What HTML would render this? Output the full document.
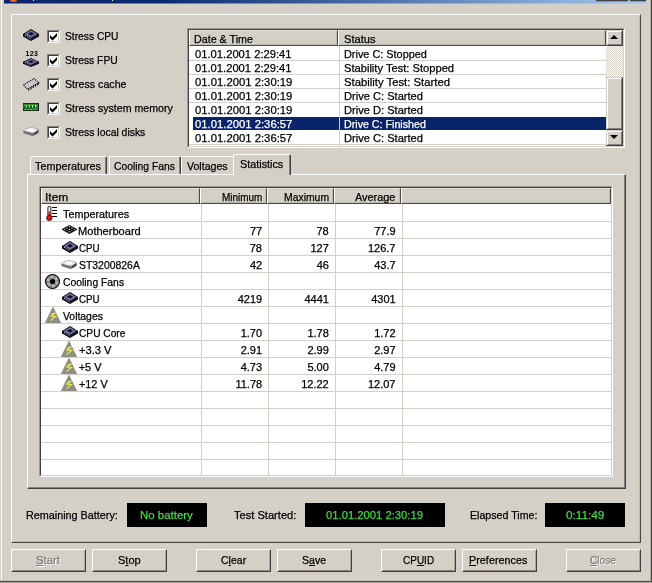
<!DOCTYPE html>
<html><head><meta charset="utf-8"><title>System Stability Test</title>
<style>
*{margin:0;padding:0;box-sizing:border-box}
html,body{width:652px;height:583px;overflow:hidden;background:#d4d0c8}
body{font-family:"Liberation Sans",sans-serif;font-size:11px;color:#000;line-height:13px}
#w{position:absolute;left:0;top:0;width:652px;height:583px;will-change:transform;overflow:hidden}
.a{position:absolute}
.t{position:absolute;white-space:nowrap;line-height:13px;transform-origin:0 0;-webkit-text-stroke:0.25px}
.title{left:0;top:0;width:652px;height:4px;background:linear-gradient(90deg,#0a246a 0%,#0a246a 10%,#a6caf0 100%)}
.raised{border:1px solid;border-color:#fff #484640 #484640 #fff}
.raised>i{position:absolute;left:0;top:0;right:0;bottom:0;border-right:1px solid #bcb8b0;border-bottom:1px solid #bcb8b0}
.sunk{border:1px solid;border-color:#a09c94 #fff #fff #a09c94}
.sunk>.in{position:absolute;left:0;top:0;right:0;bottom:0;border:1px solid;border-color:#404040 #d4d0c8 #d4d0c8 #404040;background:#fff;overflow:hidden}
.btn{position:absolute;height:23px;width:75px;border:1px solid;border-color:#fff #404040 #404040 #fff}
.btn>i{position:absolute;left:0;top:0;right:0;bottom:0;border:1px solid;border-color:#d4d0c8 #aaa69e #8c8880 #d4d0c8}
.dis{color:#808080;text-shadow:1px 1px 0 #fff}
.hd{position:absolute;background:#d4d0c8;border:1px solid;border-color:#e4e2dc #4c4a44 #4c4a44 #fff}
.hd>i{position:absolute;left:0;top:0;right:0;bottom:0;border-right:1px solid #c0bcb4;border-bottom:1px solid #c0bcb4}
.cb{position:absolute;width:13px;height:13px;border:1px solid;border-color:#808080 #fff #fff #808080;background:#fff}
.cb>i{position:absolute;left:0;top:0;right:0;bottom:0;border:1px solid;border-color:#404040 #d4d0c8 #d4d0c8 #404040}
.blk{position:absolute;background:#000}
.g{position:absolute;background:#d4d0c8}
svg{position:absolute;overflow:visible}
.tab{position:absolute;background:#d4d0c8;border-top:1px solid #fff;border-left:1px solid #fff;border-right:1px solid #404040;border-radius:2px 2px 0 0}
.tab>i{position:absolute;left:0;top:0;right:0;bottom:0;border-right:1px solid #808080}
</style></head><body><div id="w">
<div class="a" style="left:4px;top:0;width:643px;height:3px;background:linear-gradient(90deg,#0a246a 0%,#0c2a72 25%,#a6caf0 100%)"></div>
<div class="a" style="left:4px;top:3px;width:643px;height:1px;background:linear-gradient(90deg,#6f7a99 0%,#717e9d 25%,#bdcddc 100%)"></div>
<div class="a" style="left:10px;top:0;width:7px;height:2px;background:#e0681c;border-radius:0 0 4px 4px"></div>
<div class="a" style="left:33px;top:0;width:1px;height:1px;background:#fff"></div>
<div class="a" style="left:112px;top:0;width:1px;height:1px;background:#fff"></div>
<div class="a" style="left:596px;top:0;width:32px;height:1px;background:#404040"></div><div class="a" style="left:596px;top:1px;width:32px;height:1px;background:rgba(64,64,64,.25)"></div>
<div class="a" style="left:630px;top:0;width:16px;height:1px;background:#404040"></div><div class="a" style="left:630px;top:1px;width:16px;height:1px;background:rgba(64,64,64,.25)"></div>
<div class="a" style="left:1px;top:0;width:1px;height:582px;background:#fff"></div>
<div class="a" style="left:650px;top:0;width:1px;height:582px;background:#b4b0a8"></div>
<div class="a" style="left:651px;top:0;width:1px;height:583px;background:#404040"></div>
<div class="a" style="left:0;top:580px;width:651px;height:1px;background:#c4c0b8"></div>
<div class="a" style="left:0;top:581px;width:652px;height:1px;background:#4c4a46"></div>
<div class="a" style="left:0;top:582px;width:652px;height:1px;background:#a8a49e"></div>
<div class="a raised" style="left:11px;top:14px;width:630px;height:529px"><i></i></div>
<div class="cb" style="left:47px;top:30px"><i></i><svg style="left:1px;top:1px" width="9" height="9" viewBox="0 0 9 9"><path d="M1 3 L3.5 5.5 L8 1 L8 4 L3.5 8.5 L1 6 Z" fill="#000"/></svg></div>
<div class="cb" style="left:47px;top:54px"><i></i><svg style="left:1px;top:1px" width="9" height="9" viewBox="0 0 9 9"><path d="M1 3 L3.5 5.5 L8 1 L8 4 L3.5 8.5 L1 6 Z" fill="#000"/></svg></div>
<div class="cb" style="left:47px;top:78px"><i></i><svg style="left:1px;top:1px" width="9" height="9" viewBox="0 0 9 9"><path d="M1 3 L3.5 5.5 L8 1 L8 4 L3.5 8.5 L1 6 Z" fill="#000"/></svg></div>
<div class="cb" style="left:47px;top:102px"><i></i><svg style="left:1px;top:1px" width="9" height="9" viewBox="0 0 9 9"><path d="M1 3 L3.5 5.5 L8 1 L8 4 L3.5 8.5 L1 6 Z" fill="#000"/></svg></div>
<div class="cb" style="left:47px;top:126px"><i></i><svg style="left:1px;top:1px" width="9" height="9" viewBox="0 0 9 9"><path d="M1 3 L3.5 5.5 L8 1 L8 4 L3.5 8.5 L1 6 Z" fill="#000"/></svg></div>
<svg style="left:23px;top:29px" width="16" height="12" viewBox="0 0 16 12" preserveAspectRatio="none"><path d="M8 0 L16 5 L16 7.5 L8 12 L0 7.5 L0 5 Z" fill="#050510"/><path d="M8 1.1 L14.6 5 L8 8.9 L1.4 5 Z" fill="#6e6e90"/><path d="M8 2.9 L11 4.8 L8 6.5 L5 4.8 Z" fill="#0a0a34"/><path d="M1.2 6.3 L8 10.3 L14.8 6.3 L14.8 7 L8 11 L1.2 7 Z" fill="#2a2a40"/><path d="M2 6.2 l1 .6 M4.2 7.5 l1 .6 M6.4 8.8 l1 .6" stroke="#d8d8f0" stroke-width="0.9"/></svg>
<div class="t" style="left:25.5px;top:50px;font-size:7px;line-height:7px;letter-spacing:0.3px;font-weight:bold;-webkit-text-stroke:0">123</div>
<svg style="left:23px;top:57.5px" width="16" height="9" viewBox="0 0 16 12" preserveAspectRatio="none"><path d="M8 0 L16 5 L16 7.5 L8 12 L0 7.5 L0 5 Z" fill="#050510"/><path d="M8 1.1 L14.6 5 L8 8.9 L1.4 5 Z" fill="#6e6e90"/><path d="M8 2.9 L11 4.8 L8 6.5 L5 4.8 Z" fill="#0a0a34"/><path d="M1.2 6.3 L8 10.3 L14.8 6.3 L14.8 7 L8 11 L1.2 7 Z" fill="#2a2a40"/><path d="M2 6.2 l1 .6 M4.2 7.5 l1 .6 M6.4 8.8 l1 .6" stroke="#d8d8f0" stroke-width="0.9"/></svg>
<svg style="left:23px;top:78px" width="16" height="13" viewBox="0 0 16 13"><path d="M0.4 6.9 L11 0.5 L15.7 4.5 L4.4 11.3 Z" fill="#c6c6c6"/><path d="M0.4 6.9 L11 0.5 L15.7 4.5 L4.4 11.3 Z" fill="none" stroke="#0c0c0c" stroke-width="1.1" stroke-dasharray="1.1 0.9"/><path d="M5.9 10.6 v2 M8.1 9.3 v2 M10.2 8 v2 M12.3 6.8 v2 M14.3 5.6 v2 M15.5 4.4 v2.2" stroke="#0c0c0c" stroke-width="1.1"/></svg>
<svg style="left:23px;top:103px" width="16" height="8" viewBox="0 0 16 8"><rect x="0" y="0" width="16" height="8" fill="#0c200c"/><rect x="0.5" y="0.8" width="14.8" height="5" fill="#2a8a2a"/><path d="M3 2 v2.4 M6.2 2 v2.4 M9.4 2 v2.4 M12.6 2 v2.4" stroke="#b8f4b0" stroke-width="1.1"/><path d="M2 3.2 v2 M5.2 3.2 v2 M8.4 3.2 v2 M11.6 3.2 v2" stroke="#0a3a0a" stroke-width="1"/><rect x="15" y="0" width="1" height="8" fill="#081008"/><path d="M1.5 6.6 H14.5" stroke="#d8d850" stroke-width="1" stroke-dasharray="2 1"/></svg>
<svg style="left:23px;top:127px" width="16" height="9" viewBox="0 0 16 9"><path d="M0.3 3.6 Q0.3 2.6 2 2 L6 0.4 Q7 0 8.5 0.3 L14.5 1.8 Q15.8 2.2 15.8 3.2 L15.8 5 Q15.8 6 14.5 6.7 L11 8.6 Q10 9.1 8.5 8.7 L1.5 6.6 Q0.3 6.2 0.3 5.2 Z" fill="#747474"/><path d="M0.6 3.4 Q0.6 2.7 2 2.2 L6 0.7 Q7 0.3 8.5 0.6 L14.3 2 Q15.5 2.4 14.6 3.2 L11 5.6 Q10 6.2 8.6 5.8 L1.8 4 Q0.6 3.8 0.6 3.4 Z" fill="#e4e4e4"/><ellipse cx="7.6" cy="2.9" rx="3.4" ry="1.5" fill="#fafafa"/><path d="M11 6.3 L15.3 3.6 L15.3 5 L11 7.9 Z" fill="#3c3c3c"/></svg>
<div class="a sunk" style="left:187px;top:28px;width:438px;height:120px"><div class="in">
<div class="hd" style="left:0;top:0;width:149px;height:16px"><i></i></div>
<div class="hd" style="left:149px;top:0;width:268px;height:16px"><i></i></div>
<div class="g" style="left:0;top:30px;width:417px;height:1px"></div>
<div class="g" style="left:0;top:44px;width:417px;height:1px"></div>
<div class="g" style="left:0;top:58px;width:417px;height:1px"></div>
<div class="g" style="left:0;top:72px;width:417px;height:1px"></div>
<div class="a" style="left:4px;top:87px;width:413px;height:13px;background:#0a246a"></div>
<div class="g" style="left:0;top:114px;width:417px;height:1px"></div>
<div class="g" style="left:150px;top:16px;width:1px;height:100px"></div>
<div class="a" style="left:417px;top:0;width:17px;height:116px;background:repeating-conic-gradient(#fff 0 25%,#d4d0c8 0 50%) 0 0/2px 2px"></div>
<div class="a" style="left:417px;top:0px;width:17px;height:16px;background:#d4d0c8;border:1px solid;border-color:#d4d0c8 #404040 #404040 #d4d0c8"><div class="a" style="left:0;top:0;right:0;bottom:0;border:1px solid;border-color:#fff #808080 #808080 #fff"></div><svg style="left:3px;top:4px" width="8" height="4" viewBox="0 0 8 4"><path d="M0 4 L4 0 L8 4 Z" fill="#000"/></svg></div>
<div class="a" style="left:417px;top:100px;width:17px;height:16px;background:#d4d0c8;border:1px solid;border-color:#d4d0c8 #404040 #404040 #d4d0c8"><div class="a" style="left:0;top:0;right:0;bottom:0;border:1px solid;border-color:#fff #808080 #808080 #fff"></div><svg style="left:3px;top:4px" width="8" height="4" viewBox="0 0 8 4"><path d="M0 0 L8 0 L4 4 Z" fill="#000"/></svg></div>
<div class="a" style="left:417px;top:47px;width:17px;height:53px;background:#d4d0c8;border:1px solid;border-color:#d4d0c8 #404040 #404040 #d4d0c8"><div class="a" style="left:0;top:0;right:0;bottom:0;border:1px solid;border-color:#fff #808080 #808080 #fff"></div></div>
</div></div>
<div class="tab" style="left:30px;top:156px;width:77px;height:18px"><i></i></div>
<div class="tab" style="left:109px;top:156px;width:72px;height:18px"><i></i></div>
<div class="tab" style="left:181px;top:156px;width:54px;height:18px"><i></i></div>
<div class="a" style="left:27px;top:174px;width:599px;height:315px;border:1px solid;border-color:#fff #404040 #404040 #fff"><div class="a" style="left:0;top:0;right:0;bottom:0;border-right:1px solid #808080;border-bottom:1px solid #808080"></div></div>
<div class="tab" style="left:233px;top:154px;width:58px;height:21px"><i></i></div>
<div class="a sunk" style="left:39px;top:186px;width:574px;height:291px"><div class="in">
<div class="hd" style="left:0px;top:0;width:159px;height:16px"><i></i></div>
<div class="hd" style="left:159px;top:0;width:67px;height:16px"><i></i></div>
<div class="hd" style="left:226px;top:0;width:67px;height:16px"><i></i></div>
<div class="hd" style="left:293px;top:0;width:67px;height:16px"><i></i></div>
<div class="hd" style="left:360px;top:0;width:210px;height:16px"><i></i></div>
<div class="g" style="left:0;top:33px;width:570px;height:1px"></div>
<div class="g" style="left:0;top:50px;width:570px;height:1px"></div>
<div class="g" style="left:0;top:67px;width:570px;height:1px"></div>
<div class="g" style="left:0;top:84px;width:570px;height:1px"></div>
<div class="g" style="left:0;top:101px;width:570px;height:1px"></div>
<div class="g" style="left:0;top:118px;width:570px;height:1px"></div>
<div class="g" style="left:0;top:135px;width:570px;height:1px"></div>
<div class="g" style="left:0;top:152px;width:570px;height:1px"></div>
<div class="g" style="left:0;top:169px;width:570px;height:1px"></div>
<div class="g" style="left:0;top:186px;width:570px;height:1px"></div>
<div class="g" style="left:0;top:203px;width:570px;height:1px"></div>
<div class="g" style="left:0;top:220px;width:570px;height:1px"></div>
<div class="g" style="left:0;top:237px;width:570px;height:1px"></div>
<div class="g" style="left:0;top:254px;width:570px;height:1px"></div>
<div class="g" style="left:0;top:271px;width:570px;height:1px"></div>
<div class="g" style="left:0;top:288px;width:570px;height:1px"></div>
<div class="g" style="left:160px;top:16px;width:1px;height:271px"></div>
<div class="g" style="left:227px;top:16px;width:1px;height:271px"></div>
<div class="g" style="left:294px;top:16px;width:1px;height:271px"></div>
<div class="g" style="left:361px;top:16px;width:1px;height:271px"></div>
<svg style="left:5px;top:18px" width="12" height="15" viewBox="0 0 12 15"><rect x="1.9" y="0.4" width="3" height="10" rx="1.2" fill="#f0ecec" stroke="#180808" stroke-width="0.9"/><rect x="2.5" y="5.4" width="1.8" height="6" fill="#cc1414"/><circle cx="3.3" cy="11.9" r="2.7" fill="#d41818" stroke="#2c0808" stroke-width="0.8"/><path d="M6 1.5 H11 M6 4.5 H11 M6 7.5 H11 M6 10.5 H11" stroke="#080808" stroke-width="1" shape-rendering="crispEdges"/></svg>
<svg style="left:20.5px;top:37px" width="15" height="9" viewBox="0 0 15 9"><path d="M7.5 0 L15 4 L15 4.8 L7.5 9 L0 4.8 L0 4 Z" fill="#0a0a0a"/><path d="M7.5 1.1 L8.6 1.7 L7.5 2.3 L6.4 1.7 Z M5 2.5 L6.1 3.1 L5 3.7 L3.9 3.1 Z M10 2.5 L11.1 3.1 L10 3.7 L8.9 3.1 Z M7.5 3.8 L8.6 4.4 L7.5 5 L6.4 4.4 Z M2.6 3.8 L3.6 4.35 L2.6 4.9 L1.6 4.35 Z M12.4 3.8 L13.4 4.35 L12.4 4.9 L11.4 4.35 Z" fill="#dfe6df"/><path d="M7.5 5.7 L9.3 6.7 L7.5 7.8 L5.7 6.7 Z" fill="#38a858"/><path d="M5 5.1 L5.9 5.6 L5 6.1 L4.1 5.6 Z M10 5.1 L10.9 5.6 L10 6.1 L9.1 5.6 Z" fill="#8c988c"/></svg>
<svg style="left:20.5px;top:53px" width="16" height="12" viewBox="0 0 16 12" preserveAspectRatio="none"><path d="M8 0 L16 5 L16 7.5 L8 12 L0 7.5 L0 5 Z" fill="#050510"/><path d="M8 1.1 L14.6 5 L8 8.9 L1.4 5 Z" fill="#6e6e90"/><path d="M8 2.9 L11 4.8 L8 6.5 L5 4.8 Z" fill="#0a0a34"/><path d="M1.2 6.3 L8 10.3 L14.8 6.3 L14.8 7 L8 11 L1.2 7 Z" fill="#2a2a40"/><path d="M2 6.2 l1 .6 M4.2 7.5 l1 .6 M6.4 8.8 l1 .6" stroke="#d8d8f0" stroke-width="0.9"/></svg>
<svg style="left:20px;top:72px" width="16" height="9" viewBox="0 0 16 9"><path d="M0.3 3.6 Q0.3 2.6 2 2 L6 0.4 Q7 0 8.5 0.3 L14.5 1.8 Q15.8 2.2 15.8 3.2 L15.8 5 Q15.8 6 14.5 6.7 L11 8.6 Q10 9.1 8.5 8.7 L1.5 6.6 Q0.3 6.2 0.3 5.2 Z" fill="#747474"/><path d="M0.6 3.4 Q0.6 2.7 2 2.2 L6 0.7 Q7 0.3 8.5 0.6 L14.3 2 Q15.5 2.4 14.6 3.2 L11 5.6 Q10 6.2 8.6 5.8 L1.8 4 Q0.6 3.8 0.6 3.4 Z" fill="#e4e4e4"/><ellipse cx="7.6" cy="2.9" rx="3.4" ry="1.5" fill="#fafafa"/><path d="M11 6.3 L15.3 3.6 L15.3 5 L11 7.9 Z" fill="#3c3c3c"/></svg>
<svg style="left:4px;top:85.5px" width="15" height="15" viewBox="0 0 15 15"><circle cx="7.5" cy="7.5" r="7" fill="#868686" stroke="#0a0a0a" stroke-width="1.1"/><circle cx="7.5" cy="7.5" r="4.5" fill="none" stroke="#b6b6b6" stroke-width="2.6" stroke-dasharray="2.6 2.1"/><circle cx="7.5" cy="7.5" r="2.6" fill="#040404"/></svg>
<svg style="left:20.5px;top:104px" width="16" height="12" viewBox="0 0 16 12" preserveAspectRatio="none"><path d="M8 0 L16 5 L16 7.5 L8 12 L0 7.5 L0 5 Z" fill="#050510"/><path d="M8 1.1 L14.6 5 L8 8.9 L1.4 5 Z" fill="#6e6e90"/><path d="M8 2.9 L11 4.8 L8 6.5 L5 4.8 Z" fill="#0a0a34"/><path d="M1.2 6.3 L8 10.3 L14.8 6.3 L14.8 7 L8 11 L1.2 7 Z" fill="#2a2a40"/><path d="M2 6.2 l1 .6 M4.2 7.5 l1 .6 M6.4 8.8 l1 .6" stroke="#d8d8f0" stroke-width="0.9"/></svg>
<svg style="left:4px;top:119px" width="16" height="16" viewBox="0 0 16 16"><path d="M8 -0.6 L16.2 16 L-0.2 16 Z" fill="#8e8e84"/><path d="M10.6 5.6 L6 9 L10.4 9.4 L5.6 13.6" fill="none" stroke="#ecec48" stroke-width="1.25"/><path d="M6.2 7 L10 6.6" stroke="#ecec48" stroke-width="1"/></svg>
<svg style="left:20.5px;top:138px" width="16" height="12" viewBox="0 0 16 12" preserveAspectRatio="none"><path d="M8 0 L16 5 L16 7.5 L8 12 L0 7.5 L0 5 Z" fill="#050510"/><path d="M8 1.1 L14.6 5 L8 8.9 L1.4 5 Z" fill="#6e6e90"/><path d="M8 2.9 L11 4.8 L8 6.5 L5 4.8 Z" fill="#0a0a34"/><path d="M1.2 6.3 L8 10.3 L14.8 6.3 L14.8 7 L8 11 L1.2 7 Z" fill="#2a2a40"/><path d="M2 6.2 l1 .6 M4.2 7.5 l1 .6 M6.4 8.8 l1 .6" stroke="#d8d8f0" stroke-width="0.9"/></svg>
<svg style="left:20px;top:153px" width="16" height="16" viewBox="0 0 16 16"><path d="M8 -0.6 L16.2 16 L-0.2 16 Z" fill="#8e8e84"/><path d="M10.6 5.6 L6 9 L10.4 9.4 L5.6 13.6" fill="none" stroke="#ecec48" stroke-width="1.25"/><path d="M6.2 7 L10 6.6" stroke="#ecec48" stroke-width="1"/></svg>
<svg style="left:20px;top:170px" width="16" height="16" viewBox="0 0 16 16"><path d="M8 -0.6 L16.2 16 L-0.2 16 Z" fill="#8e8e84"/><path d="M10.6 5.6 L6 9 L10.4 9.4 L5.6 13.6" fill="none" stroke="#ecec48" stroke-width="1.25"/><path d="M6.2 7 L10 6.6" stroke="#ecec48" stroke-width="1"/></svg>
<svg style="left:20px;top:187px" width="16" height="16" viewBox="0 0 16 16"><path d="M8 -0.6 L16.2 16 L-0.2 16 Z" fill="#8e8e84"/><path d="M10.6 5.6 L6 9 L10.4 9.4 L5.6 13.6" fill="none" stroke="#ecec48" stroke-width="1.25"/><path d="M6.2 7 L10 6.6" stroke="#ecec48" stroke-width="1"/></svg>
</div></div>
<div class="blk" style="left:127px;top:503px;width:80px;height:24px"></div>
<div class="blk" style="left:305px;top:503px;width:140px;height:24px"></div>
<div class="blk" style="left:545px;top:503px;width:80px;height:24px"></div>
<div class="btn" style="left:11px;top:549px"><i></i></div>
<div class="btn" style="left:92px;top:549px"><i></i></div>
<div class="btn" style="left:196px;top:549px"><i></i></div>
<div class="btn" style="left:277px;top:549px"><i></i></div>
<div class="btn" style="left:381px;top:549px"><i></i></div>
<div class="btn" style="left:462px;top:549px"><i></i></div>
<div class="btn" style="left:566px;top:549px"><i></i></div>
<div class="t" style="left:64.73px;top:30px;transform:scaleX(0.9316)">Stress CPU</div>
<div class="t" style="left:64.73px;top:54px;transform:scaleX(0.9382)">Stress FPU</div>
<div class="t" style="left:64.72px;top:78px;transform:scaleX(0.9673)">Stress cache</div>
<div class="t" style="left:64.72px;top:102px;transform:scaleX(0.9632)">Stress system memory</div>
<div class="t" style="left:64.73px;top:126px;transform:scaleX(0.9448)">Stress local disks</div>
<div class="t" style="left:194.27px;top:33px;transform:scaleX(0.9738)">Date &amp; Time</div>
<div class="t" style="left:344.49px;top:33px;transform:scaleX(1.0131)">Status</div>
<div class="t" style="left:194.75px;top:48px;transform:scaleX(1.0186)">01.01.2001 2:29:41</div>
<div class="t" style="left:344.26px;top:48px;transform:scaleX(0.9891)">Drive C: Stopped</div>
<div class="t" style="left:194.75px;top:62px;transform:scaleX(1.0186)">01.01.2001 2:29:41</div>
<div class="t" style="left:344.49px;top:62px;transform:scaleX(1.0130)">Stability Test: Stopped</div>
<div class="t" style="left:194.74px;top:76px;transform:scaleX(1.0271)">01.01.2001 2:30:19</div>
<div class="t" style="left:344.49px;top:76px;transform:scaleX(1.0275)">Stability Test: Started</div>
<div class="t" style="left:194.74px;top:90px;transform:scaleX(1.0271)">01.01.2001 2:30:19</div>
<div class="t" style="left:344.24px;top:90px;transform:scaleX(1.0091)">Drive C: Started</div>
<div class="t" style="left:194.74px;top:104px;transform:scaleX(1.0271)">01.01.2001 2:30:19</div>
<div class="t" style="left:344.24px;top:104px;transform:scaleX(1.0091)">Drive D: Started</div>
<div class="t" style="left:194.74px;top:118px;transform:scaleX(1.0271);color:#fff">01.01.2001 2:36:57</div>
<div class="t" style="left:344.27px;top:118px;transform:scaleX(0.9699);color:#fff">Drive C: Finished</div>
<div class="t" style="left:194.74px;top:132px;transform:scaleX(1.0271)">01.01.2001 2:36:57</div>
<div class="t" style="left:344.24px;top:132px;transform:scaleX(1.0091)">Drive C: Started</div>
<div class="t" style="left:35.20px;top:160px;transform:scaleX(0.9806)">Temperatures</div>
<div class="t" style="left:113.73px;top:160px;transform:scaleX(0.9406)">Cooling Fans</div>
<div class="t" style="left:186.80px;top:160px;transform:scaleX(0.9619)">Voltages</div>
<div class="t" style="left:239.81px;top:158px;transform:scaleX(0.9827)">Statistics</div>
<div class="t" style="left:45.41px;top:191px;transform:scaleX(1.0886)">Item</div>
<div class="t" style="left:221.52px;top:191px;transform:scaleX(0.9040)">Minimum</div>
<div class="t" style="left:284.19px;top:191px;transform:scaleX(0.9449)">Maximum</div>
<div class="t" style="left:355.20px;top:191px;transform:scaleX(0.9888)">Average</div>
<div class="t" style="left:63.10px;top:208px;transform:scaleX(0.9821)">Temperatures</div>
<div class="t" style="left:78.45px;top:225px;transform:scaleX(1.0066)">Motherboard</div>
<div class="t" style="left:249.95px;top:225px">77</div>
<div class="t" style="left:316.40px;top:225px">78</div>
<div class="t" style="left:374.20px;top:225px">77.9</div>
<div class="t" style="left:78.76px;top:242px;transform:scaleX(0.8864)">CPU</div>
<div class="t" style="left:249.70px;top:242px">78</div>
<div class="t" style="left:310.40px;top:242px">127</div>
<div class="t" style="left:367.95px;top:242px">126.7</div>
<div class="t" style="left:78.73px;top:259px;transform:scaleX(0.9475)">ST3200826A</div>
<div class="t" style="left:249.95px;top:259px">42</div>
<div class="t" style="left:316.65px;top:259px">46</div>
<div class="t" style="left:374.20px;top:259px">43.7</div>
<div class="t" style="left:63.03px;top:276px;transform:scaleX(0.9422)">Cooling Fans</div>
<div class="t" style="left:78.76px;top:293px;transform:scaleX(0.8864)">CPU</div>
<div class="t" style="left:237.70px;top:293px">4219</div>
<div class="t" style="left:304.40px;top:293px">4441</div>
<div class="t" style="left:371.20px;top:293px">4301</div>
<div class="t" style="left:63.10px;top:310px;transform:scaleX(0.9452)">Voltages</div>
<div class="t" style="left:78.74px;top:327px;transform:scaleX(0.9259)">CPU Core</div>
<div class="t" style="left:240.70px;top:327px">1.70</div>
<div class="t" style="left:307.40px;top:327px">1.78</div>
<div class="t" style="left:374.20px;top:327px">1.72</div>
<div class="t" style="left:78.69px;top:344px;transform:scaleX(1.0142)">+3.3 V</div>
<div class="t" style="left:240.70px;top:344px">2.91</div>
<div class="t" style="left:307.40px;top:344px">2.99</div>
<div class="t" style="left:374.20px;top:344px">2.97</div>
<div class="t" style="left:78.70px;top:361px">+5 V</div>
<div class="t" style="left:240.70px;top:361px">4.73</div>
<div class="t" style="left:307.40px;top:361px">5.00</div>
<div class="t" style="left:374.20px;top:361px">4.79</div>
<div class="t" style="left:78.71px;top:378px;transform:scaleX(0.9860)">+12 V</div>
<div class="t" style="left:235.45px;top:378px">11.78</div>
<div class="t" style="left:301.15px;top:378px">12.22</div>
<div class="t" style="left:367.95px;top:378px">12.07</div>
<div class="t" style="left:26.26px;top:509px;transform:scaleX(0.9815)">Remaining Battery:</div>
<div class="t" style="left:140.02px;top:509px;transform:scaleX(1.0400);color:#3cdc3c">No battery</div>
<div class="t" style="left:233.50px;top:509px;transform:scaleX(1.0091)">Test Started:</div>
<div class="t" style="left:325.54px;top:509px;transform:scaleX(1.0228);color:#3cdc3c">01.01.2001 2:30:19</div>
<div class="t" style="left:469.98px;top:509px;transform:scaleX(0.9662)">Elapsed Time:</div>
<div class="t" style="left:566.13px;top:509px;transform:scaleX(1.0695);color:#3cdc3c">0:11:49</div>
<div class="t" style="left:35.89px;top:554px;transform:scaleX(1.0242);color:#808080;text-shadow:1px 1px 0 #fff"><u>S</u>tart</div>
<div class="t" style="left:117.60px;top:554px;transform:scaleX(1.0023)">S<u>t</u>op</div>
<div class="t" style="left:220.52px;top:554px;transform:scaleX(0.9553)">C<u>l</u>ear</div>
<div class="t" style="left:302.12px;top:554px;transform:scaleX(0.9608)">S<u>a</u>ve</div>
<div class="t" style="left:402.65px;top:554px;transform:scaleX(0.9083)">CP<u>U</u>ID</div>
<div class="t" style="left:469.36px;top:554px;transform:scaleX(0.9854)"><u>P</u>references</div>
<div class="t" style="left:590.14px;top:554px;transform:scaleX(0.9174);color:#808080;text-shadow:1px 1px 0 #fff"><u>C</u>lose</div>
</div></body></html>
